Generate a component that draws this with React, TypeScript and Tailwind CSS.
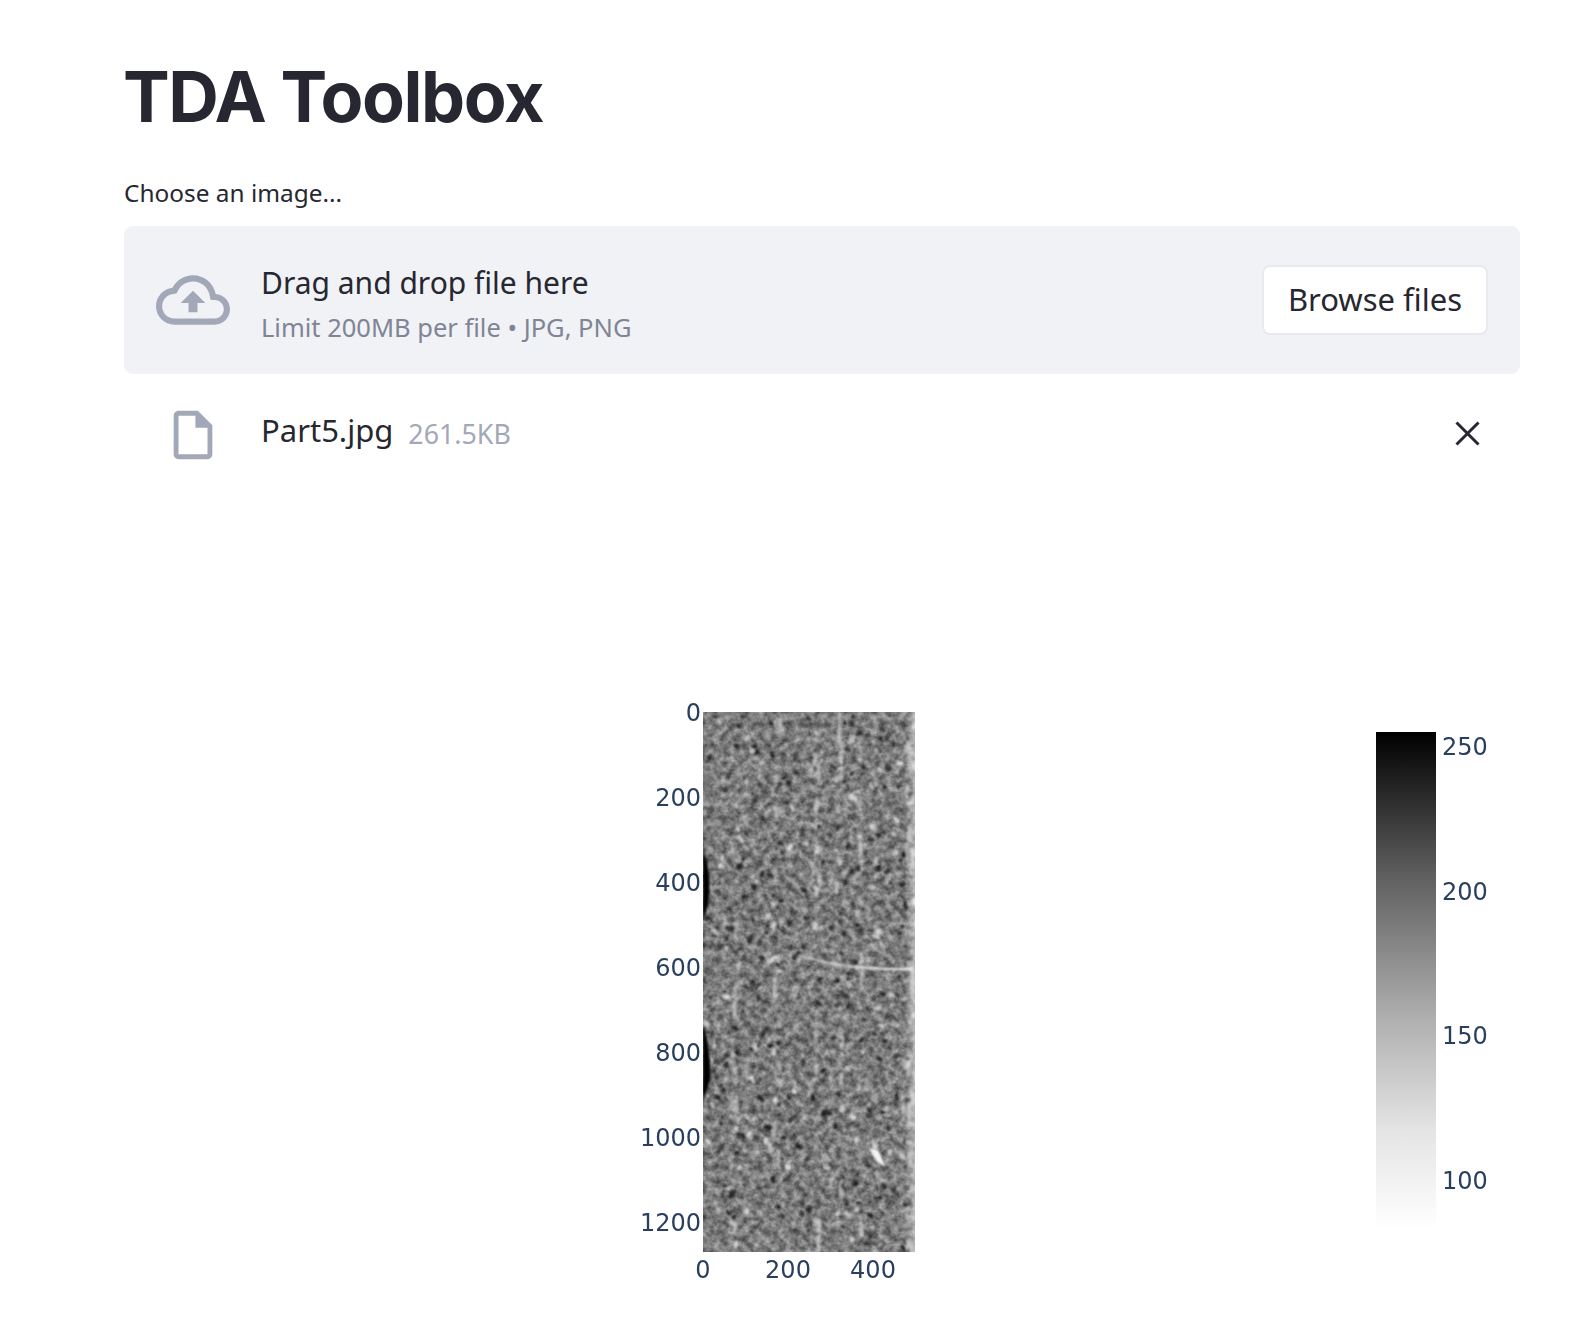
import React from "react";

function rng(seed: number) {
  let s = seed;
  return () => {
    s = (s * 1664525 + 1013904223) >>> 0;
    return s / 4294967296;
  };
}

const X0 = 703, X1 = 915, Y0 = 712, Y1 = 1252;

type Spot = { x: number; y: number; rx: number; ry: number; a: number; o: number };

function spots(seed: number, n: number, minR: number, maxR: number, oMin: number, oMax: number): Spot[] {
  const r = rng(seed);
  const out: Spot[] = [];
  for (let i = 0; i < n; i++) {
    out.push({
      x: X0 + r() * (X1 - X0),
      y: Y0 + r() * (Y1 - Y0),
      rx: minR + r() * (maxR - minR),
      ry: minR * 0.7 + r() * (maxR - minR) * 0.6,
      a: r() * 180,
      o: oMin + r() * (oMax - oMin),
    });
  }
  return out;
}

const midDark = spots(11, 500, 1.8, 3.4, 0.2, 0.45);
const dark = spots(37, 300, 1.8, 3.8, 0.55, 0.95);
const light = spots(53, 170, 2, 4.4, 0.35, 0.8);

const streakR = rng(71);
const streaks: { x: number; y: number; h: number; o: number }[] = [];
[733, 775, 815, 838, 858, 905, 911].forEach((cx) => {
  for (let i = 0; i < 14; i++) {
    streaks.push({ x: cx + (streakR() - 0.5) * 7, y: Y0 + streakR() * 540, h: 6 + streakR() * 14, o: 0.25 + streakR() * 0.45 });
  }
});

function Spots({ list, fill }: { list: Spot[]; fill: string }) {
  return (
    <g fill={fill}>
      {list.map((p, i) => (
        <ellipse key={i} cx={p.x} cy={p.y} rx={p.rx} ry={p.ry} opacity={p.o} transform={`rotate(${p.a} ${p.x} ${p.y})`} />
      ))}
    </g>
  );
}

function Chart() {
  const yTicks: [string, number][] = [["0", 712], ["200", 797], ["400", 882], ["600", 967], ["800", 1052], ["1000", 1137], ["1200", 1222]];
  const xTicks: [string, number][] = [["0", 703], ["200", 788], ["400", 873]];
  const cbTicks: [string, number][] = [["250", 746], ["200", 891], ["150", 1035], ["100", 1180]];
  return (
    <svg className="block w-[1396px] h-[642px]" viewBox="124 700 1396 642" fontFamily="'DejaVu Sans', sans-serif" fontSize="24" fill="#2a3f5f">
      <defs>
        <clipPath id="plot"><rect x={X0} y={Y0} width={X1 - X0} height={Y1 - Y0} /></clipPath>
        <filter id="soft" x="-5%" y="-5%" width="110%" height="110%"><feGaussianBlur stdDeviation="1" /></filter>
        <filter id="softer" x="-5%" y="-5%" width="110%" height="110%"><feGaussianBlur stdDeviation="1" /></filter>
        <filter id="grain" x="0" y="0" width="100%" height="100%" colorInterpolationFilters="sRGB">
          <feTurbulence type="fractalNoise" baseFrequency="0.14" numOctaves="3" seed="7" />
          <feColorMatrix type="matrix" values="0.62 0 0 0 0.18  0.62 0 0 0 0.18  0.62 0 0 0 0.18  0 0 0 0 1" />
          <feGaussianBlur stdDeviation="0.7" />
        </filter>
        <linearGradient id="cb" x1="0" y1="0" x2="0" y2="1">
          <stop offset="0" stopColor="#000" />
          <stop offset="0.3" stopColor="#626262" />
          <stop offset="0.58" stopColor="#b0b0b0" />
          <stop offset="0.8" stopColor="#e4e4e4" />
          <stop offset="1" stopColor="#fff" />
        </linearGradient>
        <linearGradient id="edge" x1="0" y1="0" x2="1" y2="0">
          <stop offset="0" stopColor="#fff" stopOpacity="0" />
          <stop offset="1" stopColor="#fff" stopOpacity="0.45" />
        </linearGradient>
      </defs>
      <g clipPath="url(#plot)">
        <rect x={X0} y={Y0} width={X1 - X0} height={Y1 - Y0} fill="#7a7a7a" filter="url(#grain)" />
        <g filter="url(#soft)">
          <Spots list={midDark} fill="#3f3f3f" />
          <g fill="#d8d8d8">
            {streaks.map((s, i) => (
              <rect key={i} x={s.x} y={s.y} width="4" height={s.h} rx="2" opacity={s.o} />
            ))}
          </g>
          <Spots list={dark} fill="#141414" />
          <Spots list={light} fill="#ececec" />
        </g>
        <g filter="url(#softer)">
          <path d="M798 955 C815 960 835 965 855 967" fill="none" stroke="#dcdcdc" strokeWidth="1.5" />
          <path d="M855 967 L885 969 L912 969" fill="none" stroke="#f0f0f0" strokeWidth="2.2" />
          <path d="M869 1148 L878 1150 L886 1167 L877 1162 Z" fill="#f4f4f4" />
          <path d="M703 851 C709 862 711 885 708 905 L703 922 Z" fill="#050505" />
          <path d="M703 1024 C708 1040 711 1060 710 1080 L703 1102 Z" fill="#000" />
        </g>
        <rect x="905" y={Y0} width="10" height={Y1 - Y0} fill="url(#edge)" />
      </g>
      <g textAnchor="end">
        {yTicks.map(([t, y]) => (
          <text key={t} x="701" y={y + 8.5}>{t}</text>
        ))}
      </g>
      <g textAnchor="middle">
        {xTicks.map(([t, x]) => (
          <text key={t} x={x} y="1278">{t}</text>
        ))}
      </g>
      <rect x="1376" y="732" width="60" height="497" fill="url(#cb)" />
      {cbTicks.map(([t, y]) => (
        <text key={t} x="1442" y={y + 8.5}>{t}</text>
      ))}
    </svg>
  );
}

export default function App() {
  return (
    <div className="w-[1570px] h-[1342px] bg-white overflow-hidden pl-[124px] pr-[50px] font-['Noto_Sans',sans-serif] text-[#262730]">
      <h1 className="pt-[55px] h-[164px] -ml-[1px] text-[70px] leading-[84px] font-bold font-['Inter',sans-serif] tracking-[-1.4px]">TDA Toolbox</h1>
      <label className="block h-[62px] pt-[12px] text-[24.4px] leading-[34px]">Choose an image...</label>
      <div className="h-[148px] rounded-[9px] bg-[#f0f2f6] flex items-center pl-[32px] pr-[32px]">
        <svg className="w-[74px] h-[74px] shrink-0" viewBox="0 0 24 24" fill="#a3a8b8">
          <path d="M19.35 10.04C18.67 6.59 15.64 4 12 4 9.11 4 6.6 5.64 5.35 8.04 2.34 8.36 0 10.91 0 14c0 3.31 2.69 6 6 6h13c2.76 0 5-2.24 5-5 0-2.64-2.05-4.78-4.65-4.96zM19 18H6c-2.21 0-4-1.79-4-4 0-2.05 1.53-3.76 3.56-3.97l1.07-.11.5-.95C8.08 7.14 9.94 6 12 6c2.62 0 4.88 1.86 5.39 4.43l.3 1.5 1.53.11c1.56.1 2.78 1.41 2.78 2.96 0 1.65-1.35 3-3 3zM8 13h2.55v3h2.9v-3H16l-4-4z" />
        </svg>
        <div className="ml-[31px] flex flex-col mt-[5px]">
          <span className="text-[30px] leading-[44px]">Drag and drop file here</span>
          <span className="text-[25.5px] leading-[36px] mt-[4px] text-[#808495]">Limit 200MB per file • JPG, PNG</span>
        </div>
        <button className="ml-auto w-[226px] h-[70px] rounded-[8px] bg-white border-2 border-[#e8eaf0] text-[31px] leading-[40px] pb-[2px]">Browse files</button>
      </div>
      <div className="h-[118px] flex items-start pl-[40px] pr-[40px] pt-[25px]">
        <svg className="w-[58px] h-[58px] shrink-0 mt-[7px]" viewBox="0 0 24 24" fill="#a3a8b8">
          <path d="M14 2H6c-1.1 0-1.99.9-1.99 2L4 20c0 1.1.89 2 1.99 2H18c1.1 0 2-.9 2-2V8l-6-6zM6 20V4h7v5h5v11H6z" />
        </svg>
        <span className="ml-[39px] text-[31px] leading-[46px] mt-[8px]">Part5.jpg</span>
        <span className="ml-[15px] text-[26.8px] leading-[46px] mt-[12px] text-[#a3a8b8]">261.5KB</span>
        <svg className="ml-auto w-[25px] h-[25px] mt-[22px]" viewBox="0 0 25 25" fill="none" stroke="#262730" strokeWidth="3">
          <path d="M1.5 1.5 L23.5 23.5 M23.5 1.5 L1.5 23.5" />
        </svg>
      </div>
      <div className="mt-[208px]"><Chart /></div>
    </div>
  );
}
